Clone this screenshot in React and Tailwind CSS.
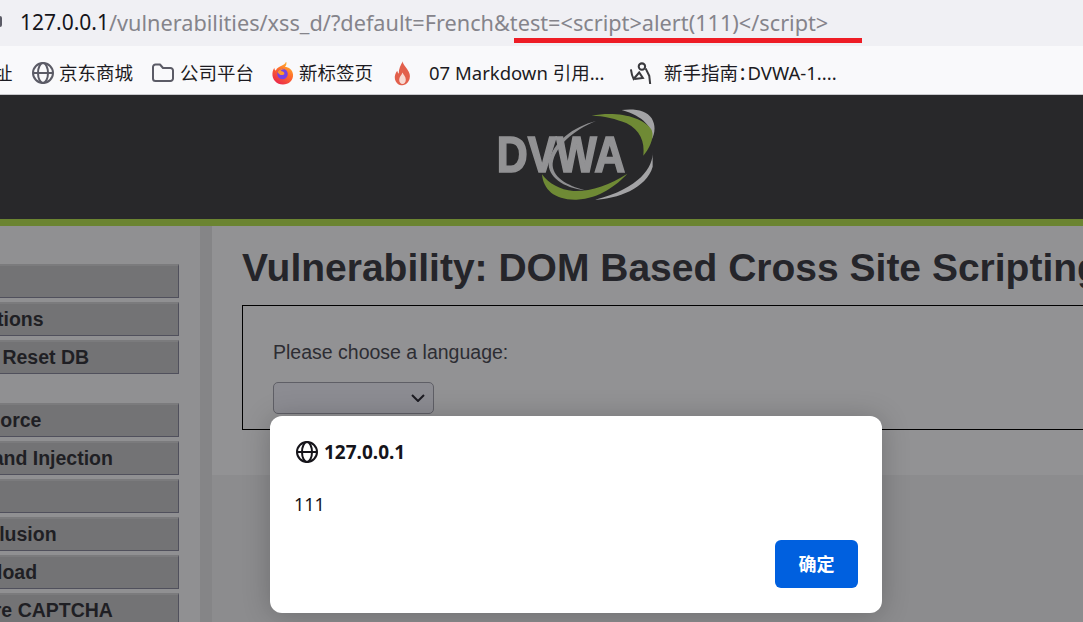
import { useState } from 'react'

const sans = "font-['Liberation_Sans',Arial,sans-serif]"
const ui = "font-['Noto_Sans','Noto_Sans_CJK_SC',sans-serif]"

const menuTop = ['Home', 'Instructions', 'Setup / Reset DB']
const menuVulns = ['Brute Force', 'Command Injection', 'CSRF', 'File Inclusion', 'File Upload', 'Insecure CAPTCHA']

function GlobeIcon({ className, color = '#5b5b66' }) {
  return (
    <svg viewBox="0 0 22 22" className={className} fill="none" stroke={color} strokeWidth="2">
      <circle cx="11" cy="11" r="10" />
      <path d="M1 11h20" />
      <ellipse cx="11" cy="11" rx="5" ry="10" />
    </svg>
  )
}

function FolderIcon() {
  return (
    <svg viewBox="0 0 22 20" className="w-[22px] h-[20px]" fill="none" stroke="#5b5b66" strokeWidth="2" strokeLinejoin="round">
      <path d="M1 4a2.5 2.5 0 0 1 2.5-2.5h4.5l3 3.500h7.500a2.500 2.500 0 0 1 2.500 2.500v8a2.500 2.500 0 0 1-2.500 2.500h-15a2.500 2.500 0 0 1-2.500-2.500z" />
    </svg>
  )
}

function FirefoxIcon() {
  return (
    <svg viewBox="0 0 24 24" className="w-[23px] h-[24px]">
      <defs>
        <linearGradient id="fx" x1="0.8" y1="0" x2="0.2" y2="1">
          <stop offset="0" stopColor="#ffbd2e" />
          <stop offset="0.45" stopColor="#ff6a2b" />
          <stop offset="1" stopColor="#e8224f" />
        </linearGradient>
      </defs>
      <path d="M16 0.500c0.500 2.500-0.500 4-1.500 5 4 0.500 8 3 8.500 8 0.500 6-4.500 10.500-10.500 10.500-6.500 0-11.500-5-11-11.500 0.200-2.500 1-4.500 2-6 0 1.500 0.500 2.500 1.500 3 1-3 4-4 6-5 2-1 4-2 4.500-4z" fill="url(#fx)" />
      <circle cx="12" cy="13" r="5.500" fill="#7542e5" />
      <path d="M7 11c1.500-3 5-4 7.500-2.500-2-0.500-4 0-4.500 1.500 2 0 4 1 4 3-1 1.500-3.500 1.500-5 0.500-1-0.700-1.700-1.500-2-2.500z" fill="#ff9a2b" />
    </svg>
  )
}

function FlameIcon() {
  return (
    <svg viewBox="0 0 18 26" className="w-[17px] h-[25px]">
      <path d="M9 0c1 4 3 5.500 5 8.500 2.500 3.500 3.500 6.500 2.500 10-1 3.500-3.500 6.500-7.500 7-4 0-7-2.500-8-6.500-0.700-3.500 0.500-6.500 2.500-9 0.200 1.500 0.700 2.500 1.500 3 0-5 2-9 4.500-13z" fill="#e2604c" />
      <path d="M9 12c1 2.500 3.500 4 3.500 7.500 0 2.500-1.500 4.500-3.500 4.500s-3.500-2-3.500-4.500c0-3 2.500-4.500 3.500-7.500z" fill="#f7d9d2" />
    </svg>
  )
}

function GuideIcon() {
  return (
    <svg viewBox="0 0 24 26" className="w-[22px] h-[24px]" fill="none" stroke="#3a3a3e" strokeWidth="2.200">
      <circle cx="13" cy="6" r="3.500" />
      <path d="M1 9c0.500 4 1.500 8 3 10.500l6-7 4 6-9 1" />
      <path d="M17 8l4 8 1 9" />
    </svg>
  )
}

function DvwaLogo() {
  return (
    <svg viewBox="60 30 510 300" className="w-[170px] h-[100px] blur-[0.6px]">
      <path d="M455 45C490 40 530 45 545 70C560 95 552 120 546 132C548 100 525 65 455 45Z" fill="#a3a3a5" />
      <path d="M548 170C550 215 510 280 375 314C440 312 530 280 548 215Z" fill="#a3a3a5" />
      <path d="M365 62C440 48 520 65 545 105C555 130 535 165 520 182C525 140 510 105 470 85C440 72 400 62 365 62Z" fill="#6f8a35" />
      <path d="M216 238C220 285 255 316 320 314C390 310 440 270 472 236C420 270 360 290 310 288C270 285 235 265 216 238Z" fill="#6f8a35" />
      <path d="M378 78C310 95 250 140 236 200C232 245 280 278 345 286C290 272 245 245 248 205C255 155 310 105 378 78Z" fill="#8f8f91" />
      <text x="80" y="232" textLength="386" lengthAdjust="spacingAndGlyphs" fontSize="148" fontWeight="700" fontFamily="Liberation Sans" fill="#929294" stroke="#929294" strokeWidth="5">DVWA</text>
    </svg>
  )
}

function MenuItem({ label }) {
  return (
    <div className={`ml-[-82px] w-[261px] h-[34px] mb-[4px] pl-[14px] flex items-center bg-[#737375] border-t-2 border-t-[#7b7b7d] border-r border-r-[#50505c] border-b border-b-[#50505c] text-[19.5px] font-bold text-[#1f1f24] whitespace-nowrap ${sans}`}>
      {label}
    </div>
  )
}

function Bookmark({ icon, label, className }) {
  return (
    <div className={`flex items-center shrink-0 ${className}`}>
      {icon}
      <span className="text-[18.5px] text-[#1c1b22] whitespace-nowrap">{label}</span>
    </div>
  )
}

export default function App() {
  const [open] = useState(true)

  return (
    <div className="relative flex flex-col w-[1083px] h-[622px] overflow-hidden bg-[#8c8c8e]">
      {/* address bar */}
      <div className={`relative h-[46px] shrink-0 bg-[#f0f0f4] flex items-center pl-[20px] text-[21px] whitespace-nowrap ${ui}`}>
        <div className="absolute left-[-6px] top-[16px] w-[8px] h-[11px] border-2 border-[#5b5b66] rounded-[2px]" />
        <span className="text-[#15141a]">127.0.0.1</span>
        <span className="text-[21.7px] text-[#85848b]">/vulnerabilities/xss_d/?default=French&amp;test=&lt;script&gt;alert(111)&lt;/script&gt;</span>
        <div className="absolute left-[514px] top-[38px] w-[348px] h-[5px] bg-[#ee1c25]" />
      </div>

      {/* bookmarks */}
      <div className={`h-[49px] shrink-0 pt-[6px] bg-[#f9f9fb] border-b border-[#c8c8cc] flex items-center ${ui}`}>
        <Bookmark className="ml-[-6px] w-[38px]" label="址" />
        <Bookmark className="w-[120px] gap-[5px]" icon={<GlobeIcon className="w-[22px] h-[22px]" />} label="京东商城" />
        <Bookmark className="w-[119px] gap-[6px]" icon={<FolderIcon />} label="公司平台" />
        <Bookmark className="w-[123px] gap-[5px]" icon={<FirefoxIcon />} label="新标签页" />
        <Bookmark className="w-[236px] gap-[18px]" icon={<FlameIcon />} label="07 Markdown 引用..." />
        <Bookmark className="gap-[12px]" icon={<GuideIcon />} label={<>新手指南<span className="tracking-[-9px]">：</span>DVWA-1....</>} />
      </div>

      {/* dvwa header */}
      <div className="h-[124px] shrink-0 pb-[4px] bg-[#28282a] flex items-center pl-[490px]">
        <DvwaLogo />
      </div>
      <div className="h-[7px] shrink-0 bg-[#6b8431]" />

      {/* page */}
      <div className="flex flex-1 min-h-0">
        <div className="w-[200px] shrink-0 pt-[38px] bg-[#909092]">
          {menuTop.map(m => <MenuItem key={m} label={m} />)}
          <div className="h-[25px]" />
          {menuVulns.map(m => <MenuItem key={m} label={m} />)}
        </div>
        <div className="w-[12px] shrink-0 bg-[#858587]" />
        <div className="flex-1 min-w-0 overflow-hidden">
          <div className="h-[249px] bg-[#929294] pl-[30px] pt-[17px]">
            <h1 className={`text-[39px] leading-[50px] font-bold text-[#25252a] whitespace-nowrap ${sans}`}>
              Vulnerability: DOM Based Cross Site Scripting
            </h1>
            <div className="mt-[12px] w-[1000px] h-[125px] border border-black pl-[30px] pt-[34px]">
              <p className={`text-[19.5px] leading-[24px] text-[#2d2d33] ${sans}`}>Please choose a language:</p>
              <div className="mt-[18px] w-[161px] h-[32px] rounded-[5px] bg-[#8c8c92] border border-[#5f5f66] flex items-center justify-end pr-[8px]">
                <svg viewBox="0 0 14 8" className="w-[14px] h-[8px]" fill="none" stroke="#1c1b22" strokeWidth="2">
                  <path d="M1 1l6 6 6-6" />
                </svg>
              </div>
            </div>
          </div>
        </div>
      </div>

      {/* alert dialog */}
      {open && (
        <div className={`absolute left-[270px] top-[416px] w-[612px] h-[197px] bg-white rounded-[12px] shadow-[0_2px_28px_rgba(0,0,0,0.22)] flex flex-col px-[24px] pt-[24px] pb-[25px] ${ui}`}>
          <div className="flex items-center gap-[6px] h-[24px] pl-[2px]">
            <GlobeIcon className="w-[22px] h-[22px]" color="#15141a" />
            <span className="text-[19px] font-bold text-[#15141a]">127.0.0.1</span>
          </div>
          <p className="mt-[28px] text-[18px] leading-[24px] text-[#15141a]">111</p>
          <div className="mt-auto flex justify-end">
            <button className="w-[83px] h-[48px] rounded-[6px] bg-[#0060df] text-white text-[18px] font-bold">确定</button>
          </div>
        </div>
      )}
    </div>
  )
}
